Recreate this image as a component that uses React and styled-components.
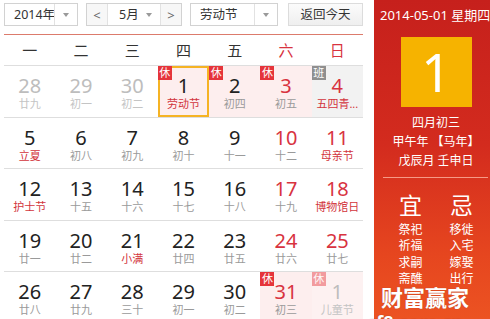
import React from 'react'
import styled, { createGlobalStyle, css } from 'styled-components'

const GlobalStyle = createGlobalStyle`
  html, body {
    margin: 0;
    padding: 0;
    background: #fff;
    overflow: hidden;
  }
  body {
    font-family: "Noto Sans", "Noto Sans CJK SC", sans-serif;
  }
`

const RED = '#d8333f'

const Page = styled.div`
  position: relative;
  display: flex;
  width: 498px;
  height: 319px;
  overflow: hidden;
  background: #fff;
`

const Left = styled.div`
  width: 374px;
  box-sizing: border-box;
  padding: 3px 0 0 4px;
  display: flex;
  flex-direction: column;
`

const Toolbar = styled.div`
  display: flex;
  align-items: center;
  width: 359px;
  height: 23px;
  gap: 8px;
  padding-bottom: 8px;
  border-bottom: 1px solid #dc7b6c;
`

const Select = styled.div`
  display: flex;
  box-sizing: border-box;
  width: ${p => p.$w}px;
  height: 23px;
  border: 1px solid #d2d2d2;
  background: #fff;
  color: #333;
  font-size: 12.5px;
`

const SelectText = styled.span`
  flex: 1;
  min-width: 0;
  padding-left: ${p => p.$pad || 9}px;
  line-height: 21px;
  white-space: nowrap;
`

const ArrowBox = styled.span`
  width: ${p => p.$w || 22}px;
  flex-shrink: 0;
  display: flex;
  align-items: center;
  justify-content: center;
  border-left: ${p => (p.$plain ? 'none' : '1px solid #e2e2e2')};
  &::after {
    content: "";
    border-left: 3px solid transparent;
    border-right: 3px solid transparent;
    border-top: 4px solid #9a9a9a;
  }
`

const NavCell = styled.span`
  width: 20px;
  flex-shrink: 0;
  display: flex;
  align-items: center;
  justify-content: center;
  background: #f7f7f7;
  color: #666;
  font-size: 13px;
  ${p => (p.$side === 'left' ? 'border-right: 1px solid #e2e2e2;' : 'border-left: 1px solid #e2e2e2;')}
`

const MonthMid = styled.span`
  flex: 1;
  min-width: 0;
  display: flex;
  align-items: center;
`

const TodayButton = styled.div`
  box-sizing: border-box;
  width: 75px;
  height: 23px;
  margin-left: 2px;
  border: 1px solid #dcdcdc;
  background: linear-gradient(#fbfbfb, #efefef);
  color: #333;
  font-size: 12.5px;
  line-height: 21px;
  text-align: center;
`

const Grid = styled.div`
  width: 359px;
  display: grid;
  grid-template-columns: repeat(7, 1fr);
`

const WeekHead = styled.div`
  height: 31px;
  box-sizing: border-box;
  line-height: 30px;
  text-align: center;
  font-size: 15px;
  color: ${p => (p.$weekend ? RED : '#333')};
  border-bottom: 1px solid #dedede;
`

const Cell = styled.div`
  position: relative;
  box-sizing: border-box;
  height: 51.5px;
  border-bottom: 1px solid #dedede;
  display: flex;
  flex-direction: column;
  align-items: center;
  padding-top: 9px;
  background: ${p => p.$bg || 'transparent'};
  ${p => p.$selected && css`
    box-shadow: inset 0 0 0 2px #f5b324;
  `}
`

const DayNum = styled.div`
  font-size: 20px;
  line-height: 22px;
  color: ${p => p.$color};
`

const Lunar = styled.div`
  font-size: 11px;
  line-height: 14px;
  color: ${p => p.$color};
  white-space: nowrap;
`

const Badge = styled.span`
  position: absolute;
  left: 0;
  top: 0;
  width: 14px;
  height: 14px;
  line-height: 14px;
  text-align: center;
  font-size: 11px;
  color: #fff;
  background: ${p => (p.$work ? '#8f8f8f' : '#e5343a')};
  opacity: ${p => (p.$faded ? 0.45 : 1)};
`

const Right = styled.div`
  width: 124px;
  flex-shrink: 0;
  display: flex;
  flex-direction: column;
  color: #fff;
  background: linear-gradient(180deg, #c6201c 0%, #d32b1e 45%, #e6461f 80%, #ec5322 100%);
`

const DateLine = styled.div`
  padding: 7px 0 0 6px;
  font-size: 13px;
  line-height: 16px;
  white-space: nowrap;
`

const BigDay = styled.div`
  width: 71px;
  height: 70px;
  margin: 14px auto 0;
  background: #f6b300;
  text-align: center;
  font-size: 52px;
  line-height: 70px;
  font-weight: 400;
`

const InfoLines = styled.div`
  margin-top: 6px;
  text-align: center;
  font-size: 12px;
  line-height: 19px;
`

const Divider = styled.div`
  height: 1px;
  margin: 7px 10px 0 9px;
  background: rgba(255, 190, 170, 0.75);
`

const Columns = styled.div`
  display: flex;
  justify-content: center;
  margin-top: 14px;
`

const Column = styled.div`
  width: 51px;
  text-align: center;
`

const ColHead = styled.div`
  font-size: 23px;
  line-height: 27px;
  margin-bottom: 3px;
`

const ColItem = styled.div`
  font-size: 12px;
  line-height: 16.3px;
`

const Watermark = styled.div`
  position: absolute;
  left: 381px;
  top: 280px;
  font-size: 22px;
  font-weight: 700;
  color: #fff;
  text-shadow: 0 0 1px rgba(120, 60, 40, 0.5);
  white-space: nowrap;
`

const WatermarkUrl = styled.div`
  position: absolute;
  left: 367px;
  top: 310px;
  font-size: 18px;
  font-weight: 700;
  color: #fff;
  text-shadow: 0 0 1px rgba(80, 40, 30, 0.6);
  white-space: nowrap;
`

const weekdays = ['一', '二', '三', '四', '五', '六', '日']

// n: number, l: lunar, f: festival, w: weekend, o: other month, b: badge, bg: background
const days = [
  { n: 28, l: '廿九', o: true }, { n: 29, l: '初一', o: true }, { n: 30, l: '初二', o: true },
  { n: 1, l: '劳动节', f: true, b: '休', bg: '#fdeeee', sel: true },
  { n: 2, l: '初四', b: '休', bg: '#fdeeee' },
  { n: 3, l: '初五', w: true, b: '休', bg: '#fdeeee' },
  { n: 4, l: '五四青...', w: true, f: true, b: '班', bg: '#f2f2f2' },
  { n: 5, l: '立夏', f: true }, { n: 6, l: '初八' }, { n: 7, l: '初九' }, { n: 8, l: '初十' },
  { n: 9, l: '十一' }, { n: 10, l: '十二', w: true }, { n: 11, l: '母亲节', w: true, f: true },
  { n: 12, l: '护士节', f: true }, { n: 13, l: '十五' }, { n: 14, l: '十六' }, { n: 15, l: '十七' },
  { n: 16, l: '十八' }, { n: 17, l: '十九', w: true }, { n: 18, l: '博物馆日', w: true, f: true },
  { n: 19, l: '廿一' }, { n: 20, l: '廿二' }, { n: 21, l: '小满', f: true }, { n: 22, l: '廿四' },
  { n: 23, l: '廿五' }, { n: 24, l: '廿六', w: true }, { n: 25, l: '廿七', w: true },
  { n: 26, l: '廿八' }, { n: 27, l: '廿九' }, { n: 28, l: '三十' }, { n: 29, l: '初一' },
  { n: 30, l: '初二' }, { n: 31, l: '初三', w: true, b: '休', bg: '#fdeeee' },
  { n: 1, l: '儿童节', o: true, b: '休', bg: '#fdf1f1' },
]

const numColor = d => (d.o ? '#bdbdbd' : d.w ? RED : '#222')
const lunarColor = d => (d.o ? '#c4c4c4' : d.f ? '#d2343c' : '#9a9a9a')

const yi = ['祭祀', '祈福', '求嗣', '斋醮']
const ji = ['移徙', '入宅', '嫁娶', '出行']

export default function App() {
  return (
    <>
      <GlobalStyle />
      <Page>
        <Left>
          <Toolbar>
            <Select $w={74}>
              <SelectText>2014年</SelectText>
              <ArrowBox />
            </Select>
            <Select $w={96}>
              <NavCell $side="left">&lt;</NavCell>
              <MonthMid>
                <SelectText $pad={11}>5月</SelectText>
                <ArrowBox $plain $w={22} />
              </MonthMid>
              <NavCell $side="right">&gt;</NavCell>
            </Select>
            <Select $w={88}>
              <SelectText>劳动节</SelectText>
              <ArrowBox />
            </Select>
            <TodayButton>返回今天</TodayButton>
          </Toolbar>
          <Grid>
            {weekdays.map((w, i) => (
              <WeekHead key={w} $weekend={i > 4}>{w}</WeekHead>
            ))}
            {days.map((d, i) => (
              <Cell key={i} $bg={d.bg} $selected={d.sel}>
                {d.b && <Badge $work={d.b === '班'} $faded={d.o}>{d.b}</Badge>}
                <DayNum $color={numColor(d)}>{d.n}</DayNum>
                <Lunar $color={lunarColor(d)}>{d.l}</Lunar>
              </Cell>
            ))}
          </Grid>
        </Left>
        <Right>
          <DateLine>2014-05-01 星期四</DateLine>
          <BigDay>1</BigDay>
          <InfoLines>
            <div>四月初三</div>
            <div>甲午年 【马年】</div>
            <div>戊辰月 壬申日</div>
          </InfoLines>
          <Divider />
          <Columns>
            <Column>
              <ColHead>宜</ColHead>
              {yi.map(t => <ColItem key={t}>{t}</ColItem>)}
            </Column>
            <Column>
              <ColHead>忌</ColHead>
              {ji.map(t => <ColItem key={t}>{t}</ColItem>)}
            </Column>
          </Columns>
        </Right>
        <Watermark>财富赢家</Watermark>
        <WatermarkUrl>cf8.com.cn</WatermarkUrl>
      </Page>
    </>
  )
}
